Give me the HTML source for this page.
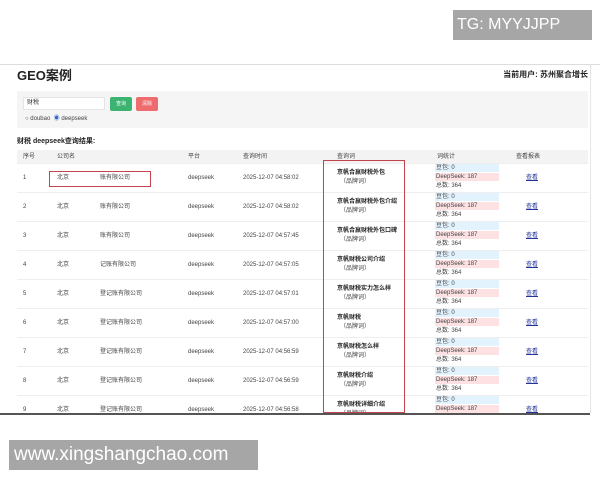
<!DOCTYPE html>
<html><head><meta charset="utf-8"><style>
*{margin:0;padding:0;box-sizing:border-box}
body{width:600px;height:480px;background:#fff;position:relative;overflow:hidden;font-family:"Liberation Sans","Noto Sans CJK SC",sans-serif;color:#333}
.a{position:absolute;white-space:nowrap}
.s{font-size:6px;color:#444;line-height:8px}
.b{font-size:6px;font-weight:bold;color:#222;line-height:8px}
.row{position:absolute;left:17px;width:571px;height:29px;border-top:1px solid #eee}
.blue{position:absolute;left:435px;width:64px;height:8px;background:#e3f3fd}
.pink{position:absolute;left:435px;width:64px;height:8px;background:#fde1e3}
</style></head><body>
<div class="a" style="left:453px;top:10px;width:139px;height:30px;background:#a6a6a6;color:#fff;font-size:16px;line-height:30px;padding-left:4px">TG: MYYJJPP</div>
<div class="a" style="left:0;top:64px;width:600px;height:1px;background:#ddd"></div>
<div class="a" style="left:590px;top:65px;width:1px;height:348px;background:#e5e5e5"></div>
<div class="a" style="left:17px;top:68px;font-size:13px;font-weight:bold;color:#222;line-height:16px">GEO案例</div>
<div class="a" style="right:12px;top:70px;font-size:8px;font-weight:bold;color:#222;line-height:10px">当前用户: 苏州聚合增长</div>
<div class="a" style="left:17px;top:91px;width:571px;height:37px;background:#f5f5f5"></div>
<div class="a" style="left:23px;top:97px;width:82px;height:13px;background:#fff;border:1px solid #e5e5e5;font-size:6px;line-height:11px;padding:0 3px">财税</div>
<div class="a" style="left:110px;top:97px;width:22px;height:14px;background:#3cb371;color:#fff;font-size:5px;text-align:center;line-height:14px;border-radius:2px">查询</div>
<div class="a" style="left:136px;top:97px;width:22px;height:14px;background:#ee6b6e;color:#fff;font-size:5px;text-align:center;line-height:14px;border-radius:2px">清除</div>
<div class="a s" style="left:25px;top:115px">○ doubao &nbsp;<span style="color:#3366cc">◉</span> deepseek</div>
<div class="a b" style="left:17px;top:138px;font-size:7px">财税 deepseek查询结果:</div>
<div class="a" style="left:17px;top:150px;width:571px;height:13px;background:#f3f3f3"></div>
<div class="a s" style="left:23px;top:153px">序号</div>
<div class="a s" style="left:57px;top:153px">公司名</div>
<div class="a s" style="left:188px;top:153px">平台</div>
<div class="a s" style="left:243px;top:153px">查询时间</div>
<div class="a s" style="left:337px;top:153px">查询词</div>
<div class="a s" style="left:437px;top:153px">词统计</div>
<div class="a s" style="left:516px;top:153px">查看报表</div>

<div id="rows"></div>
<script>
var kw=["京帆合赢财税外包","京帆合赢财税外包介绍","京帆合赢财税外包口碑","京帆财税公司介绍","京帆财税实力怎么样","京帆财税","京帆财税怎么样","京帆财税介绍","京帆财税详细介绍"];
var tm=["04:58:02","04:58:02","04:57:45","04:57:05","04:57:01","04:57:00","04:56:59","04:56:59","04:56:58"];
var co=["账有限公司","账有限公司","账有限公司","记账有限公司","登记账有限公司","登记账有限公司","登记账有限公司","登记账有限公司","登记账有限公司"];
var h="";
for(var i=0;i<9;i++){var t=163+29*i;var c=t+11;
h+='<div class="row" style="top:'+t+'px"></div>';
h+='<div class="a s" style="left:23px;top:'+c+'px">'+(i+1)+'</div>';
h+='<div class="a s" style="left:57px;top:'+c+'px">北京</div>';
h+='<div class="a s" style="left:100px;top:'+c+'px">'+co[i]+'</div>';
h+='<div class="a s" style="left:188px;top:'+c+'px">deepseek</div>';
h+='<div class="a s" style="left:243px;top:'+c+'px">2025-12-07 '+tm[i]+'</div>';
h+='<div class="a b" style="left:337px;top:'+(t+6)+'px">'+kw[i]+'</div>';
h+='<div class="a s" style="left:340px;top:'+(t+15)+'px">（品牌词）</div>';
h+='<div class="blue" style="top:'+(t+1)+'px"></div><div class="pink" style="top:'+(t+10)+'px"></div>';
h+='<div class="a s" style="left:436px;top:'+(t+1)+'px">豆包: 0</div>';
h+='<div class="a s" style="left:436px;top:'+(t+10)+'px">DeepSeek: 187</div>';
h+='<div class="a s" style="left:436px;top:'+(t+19)+'px">总数: 364</div>';
h+='<div class="a s" style="left:526px;top:'+c+'px;color:#223399;text-decoration:underline">查看</div>';}
document.getElementById("rows").innerHTML=h;
</script>
<div class="a" style="left:49px;top:171px;width:102px;height:16px;border:1.5px solid #c0454f"></div>
<div class="a" style="left:323px;top:160px;width:82px;height:253px;border:1.5px solid #c0454f"></div>
<div class="a" style="left:0;top:413px;width:590px;height:2px;background:#555"></div>
<div class="a" style="left:0;top:415px;width:600px;height:65px;background:#fff"></div>
<div class="a" style="left:9px;top:440px;width:249px;height:30px;background:#a6a6a6;color:#fff;font-size:19px;line-height:30px;padding-left:5px">www.xingshangchao.com</div>
</body></html>
